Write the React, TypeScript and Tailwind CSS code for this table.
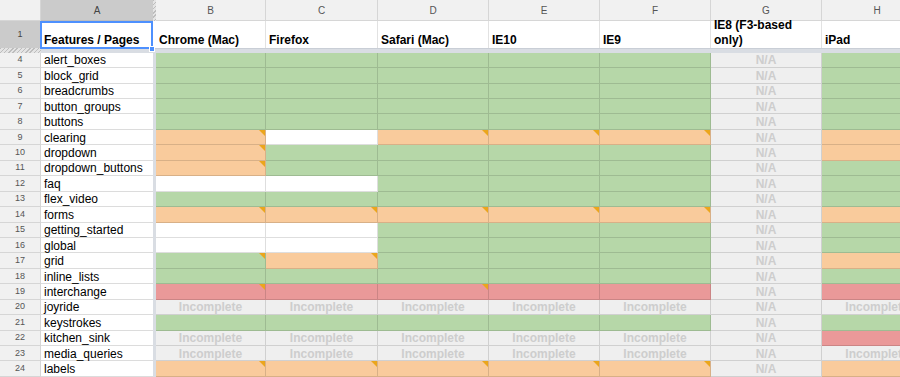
import React from "react";

type Row = [string, string, string];

const rows: Row[] = [
  ["4", "alert_boxes", "g g g g g n g"],
  ["5", "block_grid", "g g g g g n g"],
  ["6", "breadcrumbs", "g g g g g n g"],
  ["7", "button_groups", "g g g g g n g"],
  ["8", "buttons", "g g g g g n g"],
  ["9", "clearing", "o* w o* o* o* n o"],
  ["10", "dropdown", "o* g g g g n o"],
  ["11", "dropdown_buttons", "o* g g g g n g"],
  ["12", "faq", "w w g g g n g"],
  ["13", "flex_video", "g g g g g n g"],
  ["14", "forms", "o* o* o* o* o* n o"],
  ["15", "getting_started", "w w g g g n g"],
  ["16", "global", "w w g g g n g"],
  ["17", "grid", "g* o* g g g n o"],
  ["18", "inline_lists", "g g g g g n g"],
  ["19", "interchange", "r* r r* r r n r"],
  ["20", "joyride", "i i i i i n i"],
  ["21", "keystrokes", "g g g g g n g"],
  ["22", "kitchen_sink", "i i i i i n r"],
  ["23", "media_queries", "i i i i i n i"],
  ["24", "labels", "o* o* o* o* o* n o"],
];

const widths = [
  "w-[110px]",
  "w-[112px]",
  "w-[111px]",
  "w-[111px]",
  "w-[111px]",
  "w-[111px]",
  "w-[111px]",
];

const letters = ["B", "C", "D", "E", "F", "G", "H"];

const heads = ["Chrome (Mac)", "Firefox", "Safari (Mac)", "IE10", "IE9", "IE8 (F3-based only)", "iPad"];

const colors: Record<string, string> = {
  g: "bg-[#b6d7a8]",
  o: "bg-[#f9cb9c]",
  r: "bg-[#ea9999]",
  w: "bg-white",
  i: "bg-[#efefef]",
  n: "bg-[#efefef]",
};

const hatch =
  "bg-[repeating-linear-gradient(135deg,#bdbdbd_0px,#bdbdbd_1px,#e4e4e4_1px,#e4e4e4_3px)]";

function Cell({ code, w }: { code: string; w: string }) {
  const tri = code.endsWith("*");
  const k = code[0];
  return (
    <div
      className={`relative shrink-0 h-full flex items-center justify-center pt-[1px] border-r border-b border-[rgba(0,0,0,0.13)] ${w} ${colors[k]}`}
    >
      {k === "i" && (
        <span className="text-[12px] font-bold text-[#cdcdcd] leading-none">Incomplete</span>
      )}
      {k === "n" && <span className="text-[12px] font-bold text-[#cdcdcd] leading-none">N/A</span>}
      {tri && (
        <div className="absolute top-0 right-0 w-0 h-0 border-l-[6px] border-l-transparent border-t-[6px] border-t-[#eba61c]" />
      )}
    </div>
  );
}

export default function App() {
  return (
    <div className="relative w-[900px] h-[377px] overflow-hidden bg-white font-['Liberation_Sans',Arial,sans-serif] text-black">
      {/* column letters */}
      <div className="flex h-[21px]">
        <div className="shrink-0 w-[41px] h-full bg-[#f1f1f1] border-r border-b border-[#d6d6d6]" />
        <div className="shrink-0 w-[112px] h-full bg-[#cbcbcb] border-b border-[#bdbdbd] flex items-center justify-center text-[10px] text-[#444]">
          A
        </div>
        <div className={`shrink-0 w-[3px] h-full ${hatch}`} />
        {letters.map((l, i) => (
          <div
            key={l}
            className={`shrink-0 h-full ${widths[i]} bg-[#f1f1f1] border-r border-b border-[#d6d6d6] flex items-center justify-center text-[10px] text-[#555]`}
          >
            {l}
          </div>
        ))}
      </div>

      {/* row 1 */}
      <div className="flex h-[27px]">
        <div className="shrink-0 w-[41px] h-full bg-[#cbcbcb] border-r border-[#bdbdbd] flex items-center justify-center text-[9px] text-[#444]">
          1
        </div>
        <div className="shrink-0 w-[112px] h-full flex items-end pl-[3px] pb-0 text-[12px] font-bold leading-[15px]">
          Features / Pages
        </div>
        <div className="shrink-0 w-[3px] h-full bg-white" />
        {heads.map((h, i) => (
          <div
            key={h}
            className={`shrink-0 h-full ${widths[i]} border-r border-[#e2e2e2] flex items-end pl-[3px] pb-0 text-[12px] font-bold leading-[15px]`}
          >
            {h}
          </div>
        ))}
      </div>

      {/* frozen band */}
      <div className="flex h-[4.7px]">
        <div className={`shrink-0 w-[41px] h-full ${hatch}`} />
        <div className="flex-1 h-full bg-[#d9dde3] border-t border-[#c9ced6]" />
      </div>

      {/* data rows */}
      {rows.map(([n, name, codes]) => (
        <div key={n} className="flex h-[15.45px]">
          <div className="shrink-0 w-[41px] h-full bg-[#f1f1f1] border-r border-b border-[#d6d6d6] flex items-center justify-center text-[9px] text-[#555] leading-none">
            {n}
          </div>
          <div className="shrink-0 w-[112px] h-full bg-white border-b border-[#dcdcdc] flex items-center pl-[3px] pt-[1px] text-[12px] leading-none">
            {name}
          </div>
          <div className="shrink-0 w-[3px] h-full bg-[#d9dde3]" />
          {codes.split(" ").map((c, i) => (
            <Cell key={i} code={c} w={widths[i]} />
          ))}
        </div>
      ))}

      {/* selection */}
      <div className="absolute left-[40px] top-[21px] w-[113px] h-[28px] border-2 border-[#4d90fe] pointer-events-none" />
      <div className="absolute left-[149px] top-[45.5px] w-[6px] h-[6px] bg-[#4d90fe] border border-white" />
    </div>
  );
}
